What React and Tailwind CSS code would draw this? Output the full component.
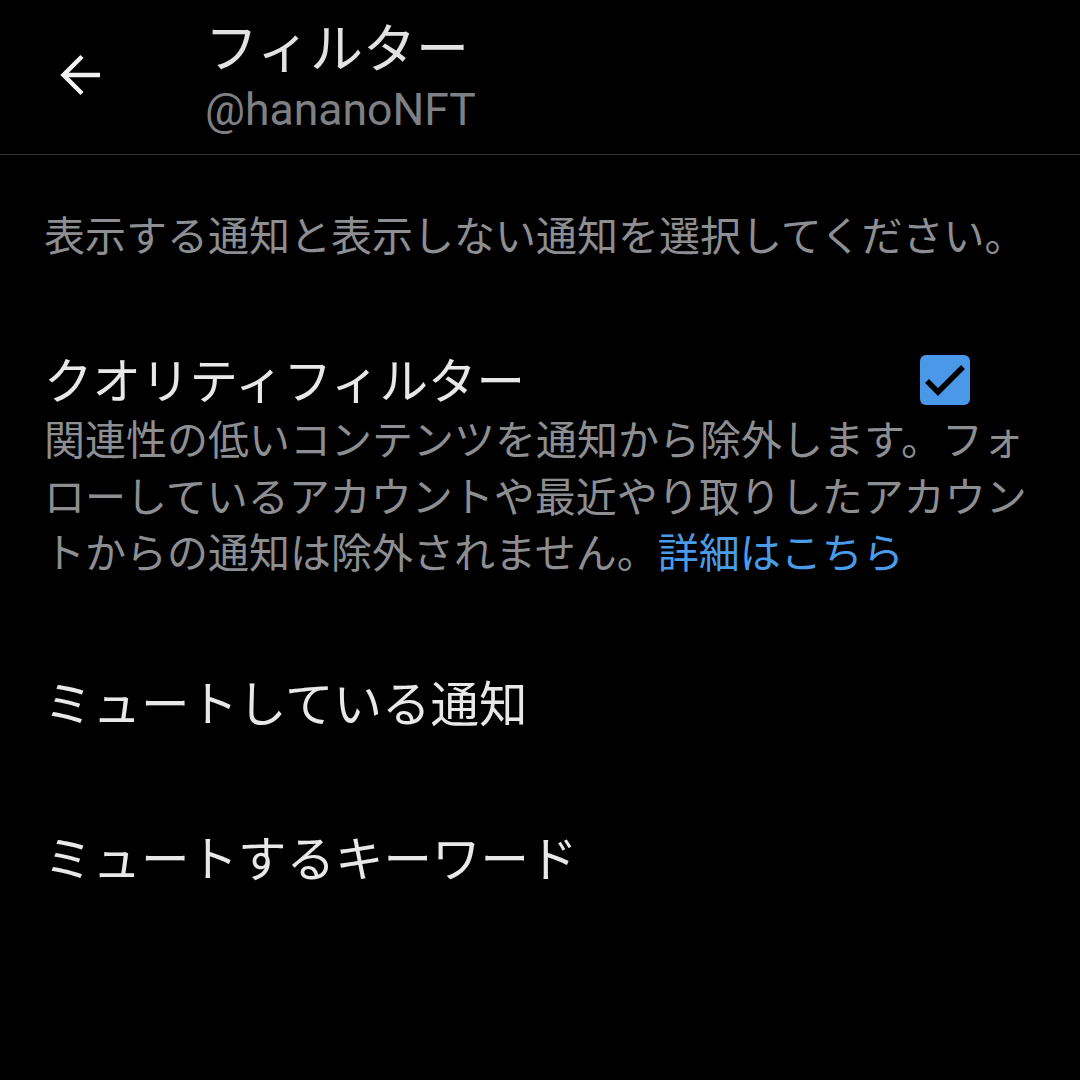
import React from "react";

const jp = { fontFamily: '"Noto Sans CJK JP", "Noto Sans", sans-serif' };
const latin = { fontFamily: 'Roboto, "Noto Sans CJK JP", sans-serif' };

const BackArrow = () => (
  <svg width="48" height="48" viewBox="0 0 48 48" fill="none">
    <path d="M44 24H8" stroke="#f2f2f2" strokeWidth="4.5" />
    <path d="M26 5.5L7.5 24L26 42.5" stroke="#f2f2f2" strokeWidth="4.5" strokeLinejoin="miter" />
  </svg>
);

const Checkbox = () => (
  <div className="w-[50px] h-[50px] rounded-[6px] bg-[#4a98e8] flex items-center justify-center">
    <svg width="50" height="50" viewBox="0 0 50 50" fill="none">
      <path d="M7 26L18 37L43 12" stroke="#000" strokeWidth="5.5" />
    </svg>
  </div>
);

export default function App() {
  return (
    <div className="w-[1080px] h-[1080px] bg-black overflow-hidden" style={jp}>
      {/* Header */}
      <div className="h-[155px] border-b border-[#333333] flex">
        <div className="w-[205px] pl-[56px] pt-[51px]">
          <BackArrow />
        </div>
        <div className="pt-[16px]">
          <div className="text-[53px] leading-[58px] text-[#e2e2e2] whitespace-nowrap">フィルター</div>
          <div className="text-[44.5px] leading-[48px] mt-[12px] text-[#7e8084]" style={latin}>
            @hananoNFT
          </div>
        </div>
      </div>

      <div className="px-[44px]">
        <p className="mt-[50px] text-[41px] leading-[56px] text-[#8c8e92] whitespace-nowrap">
          表示する通知と表示しない通知を選択してください。
        </p>

        {/* Quality filter */}
        <div className="mt-[89px] flex items-center justify-between pr-[66px]">
          <div className="text-[48.5px] leading-[56px] text-[#e8e8e8] whitespace-nowrap">
            クオリティフィルター
          </div>
          <div className="mt-[4px]">
            <Checkbox />
          </div>
        </div>
        <p className="mt-[3px] text-[41px] leading-[56.5px] text-[#8c8e92] whitespace-nowrap">
          関連性の低いコンテンツを通知から除外します。フォ
          <br />
          ローしているアカウントや最近やり取りしたアカウン
          <br />
          トからの通知は除外されません。
          <span className="text-[#4a9be8]">詳細はこちら</span>
        </p>

        <div className="mt-[94px] text-[48.5px] leading-[56px] text-[#e8e8e8] whitespace-nowrap">
          ミュートしている通知
        </div>
        <div className="mt-[99px] text-[48.5px] leading-[56px] text-[#e8e8e8] whitespace-nowrap">
          ミュートするキーワード
        </div>
      </div>
    </div>
  );
}
